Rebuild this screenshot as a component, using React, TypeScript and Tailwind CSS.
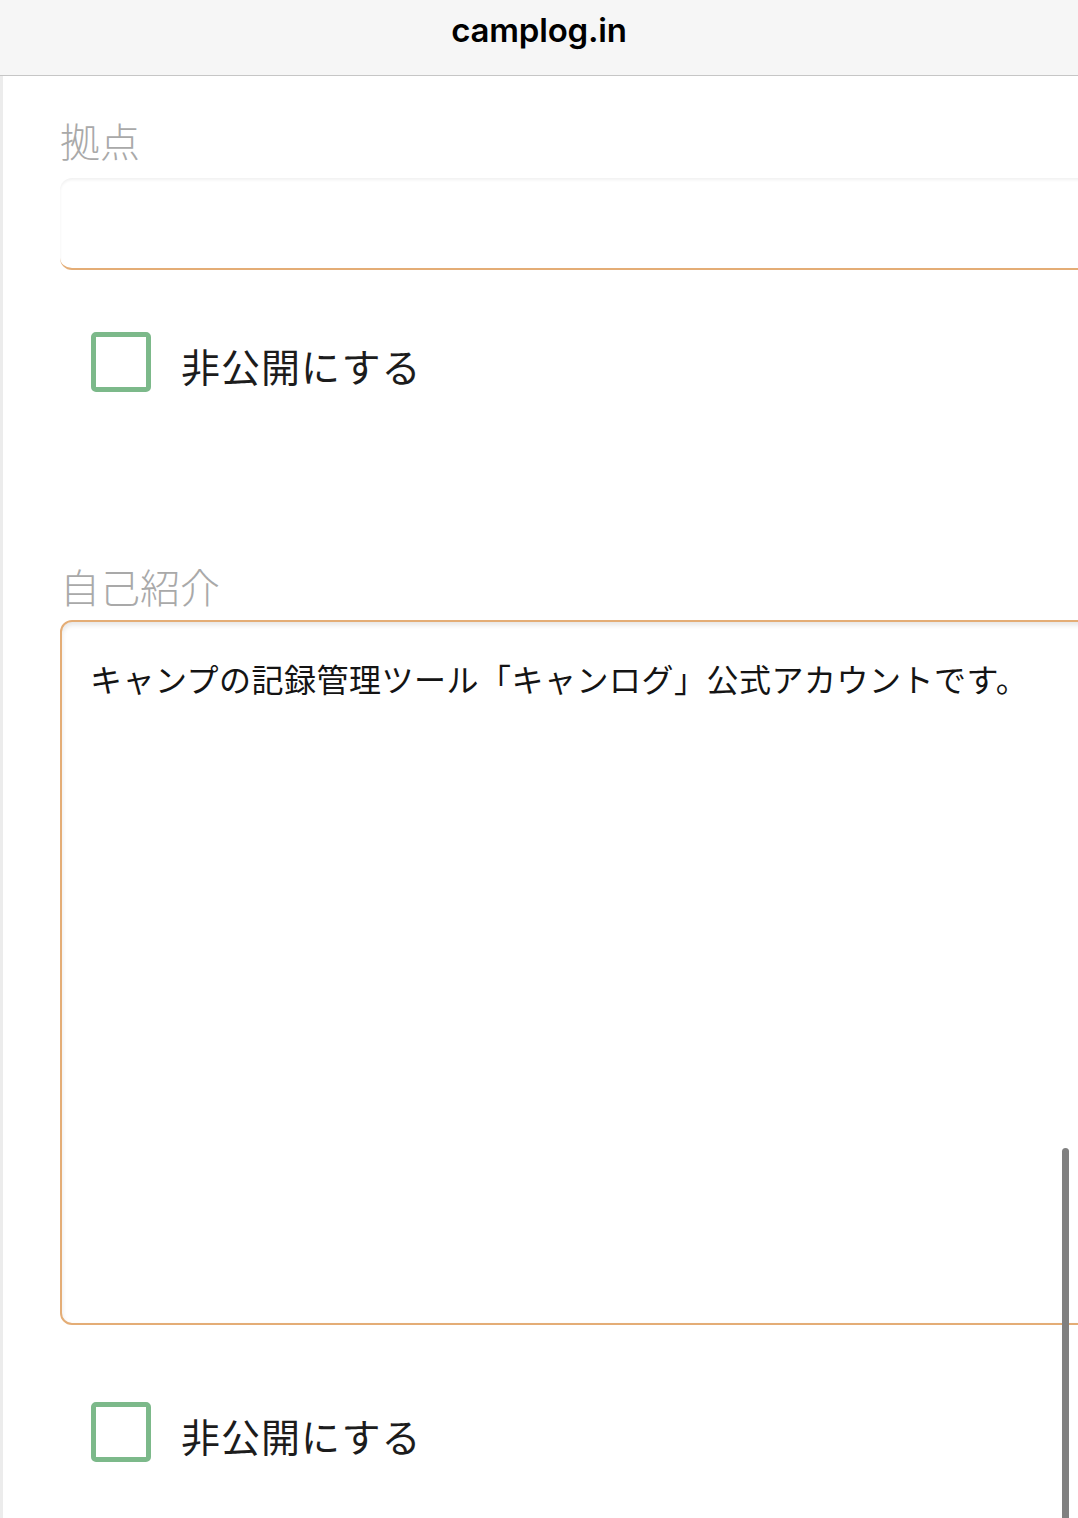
import React from "react"

const jp = "font-['Noto_Sans_CJK_JP','Noto_Sans',sans-serif]"

function PrivateToggle() {
  return (
    <label className="ml-[31px] flex h-[60px] items-center gap-[30px]">
      <span className="block h-[60px] w-[60px] shrink-0 rounded-[5px] border-[5px] border-[#7cb98a] bg-white" />
      <span className={`${jp} pt-[6px] text-[39px] leading-none tracking-[1px] text-[#1c1c1c]`}>非公開にする</span>
    </label>
  )
}

export default function App() {
  return (
    <div className="relative h-[1518px] w-[1078px] overflow-hidden bg-white">
      {/* browser bar */}
      <div className="flex h-[76px] items-start justify-center border-b border-[#c6c6c6] bg-[#f6f6f6]">
        <span className="mt-[10px] font-['Inter',sans-serif] text-[33px] font-semibold leading-[40px] tracking-[-0.2px] text-black">
          camplog.in
        </span>
      </div>

      <div className="flex h-full flex-col items-start border-l-[3px] border-[#ececec] pl-[57px]">
        {/* 拠点 */}
        <div className={`${jp} mt-[44px] text-[40px] font-light leading-none text-[#a9a9a9]`}>拠点</div>
        <div className="mt-[18px] h-[92px] w-[1100px] shrink-0 rounded-[12px] border-b-2 border-[#e4ad76] bg-white shadow-[inset_0_2px_3px_rgba(0,0,0,0.06)]" />

        <div className="mt-[62px]">
          <PrivateToggle />
        </div>

        {/* 自己紹介 */}
        <div className={`${jp} mt-[174px] text-[40px] font-light leading-none text-[#a9a9a9]`}>自己紹介</div>
        <div className="mt-[14px] h-[705px] w-[1100px] shrink-0 rounded-[12px] border-2 border-[#e4ad76] bg-white pl-[28px] pt-[32px] shadow-[inset_0_3px_5px_rgba(0,0,0,0.1)]">
          <p className={`${jp} text-[32px] leading-[48px] tracking-[0.5px] text-[#141414]`}>
            キャンプの記録管理ツール「キャンログ」公式アカウントです。
          </p>
        </div>

        <div className="mt-[77px]">
          <PrivateToggle />
        </div>
      </div>

      {/* overlay scrollbar */}
      <div className="absolute left-[1062px] top-[1148px] h-[400px] w-[7px] rounded-full bg-[#808080]" />
    </div>
  )
}
